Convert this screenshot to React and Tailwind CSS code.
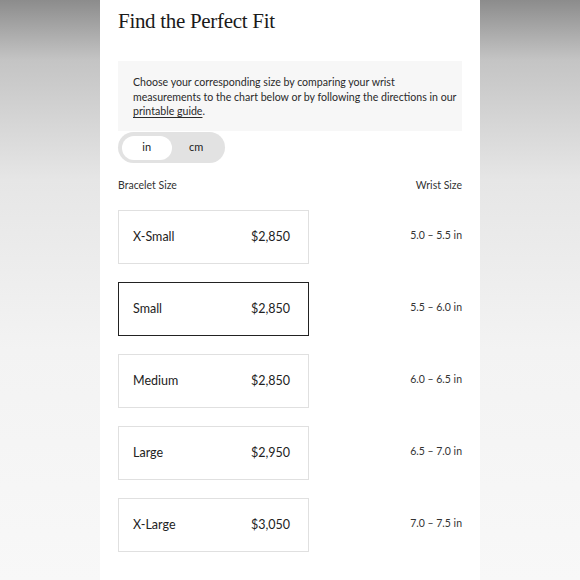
import React, { useState } from 'react'

const sizes = [
  { name: 'X-Small', price: '$2,850', wrist: '5.0 – 5.5 in' },
  { name: 'Small', price: '$2,850', wrist: '5.5 – 6.0 in' },
  { name: 'Medium', price: '$2,850', wrist: '6.0 – 6.5 in' },
  { name: 'Large', price: '$2,950', wrist: '6.5 – 7.0 in' },
  { name: 'X-Large', price: '$3,050', wrist: '7.0 – 7.5 in' },
]

export default function App() {
  const [unit, setUnit] = useState('in')
  const [selected, setSelected] = useState('Small')

  return (
    <div className="flex h-[580px] w-[580px] overflow-hidden bg-[linear-gradient(to_bottom,#8c8c8c_0px,#c4c4c4_60px,#e6e6e6_180px,#f3f3f3_350px,#f8f8f8_580px)] font-['Lato',sans-serif] text-[#222]">
      <div className="w-[100px]" />
      <div className="flex w-[380px] flex-col bg-white px-[18px]">
        {/* Title */}
        <h1 className="mt-[8px] font-['Liberation_Serif',serif] text-[21px] leading-[26px] tracking-[-0.3px] text-[#1a1a1a]">
          Find the Perfect Fit
        </h1>

        {/* Info box */}
        <div className="mt-[27px] h-[70px] whitespace-nowrap bg-[#f7f7f7] pl-[15px] pt-[14px] text-[10.6px] leading-[14.5px] text-[#2a2a2a]">
          <p>Choose your corresponding size by comparing your wrist</p>
          <p>measurements to the chart below or by following the directions in our</p>
          <p>
            <span className="underline decoration-[#2a2a2a] underline-offset-2">printable guide</span>.
          </p>
        </div>

        {/* Unit toggle */}
        <div className="mt-[1px] flex h-[31px] w-[107px] items-center rounded-full bg-[#e2e2e2] p-[4px] text-[11px]">
          {['in', 'cm'].map((u) => (
            <button
              key={u}
              onClick={() => setUnit(u)}
              className={`flex h-[24px] w-[50px] items-center justify-center rounded-full ${
                unit === u ? 'bg-white' : 'bg-transparent'
              }`}
            >
              {u}
            </button>
          ))}
        </div>

        {/* Headers */}
        <div className="mt-[15px] flex justify-between text-[10.5px] leading-[14px] text-[#333]">
          <span>Bracelet Size</span>
          <span>Wrist Size</span>
        </div>

        {/* Rows */}
        <div className="mt-[18px] flex flex-col gap-[18px]">
          {sizes.map((s) => (
            <div key={s.name} className="flex items-center justify-between">
              <button
                onClick={() => setSelected(s.name)}
                className={`flex h-[54px] w-[191px] items-center justify-between px-[14px] text-[12.5px] text-[#222] ${
                  selected === s.name ? 'border border-[#222]' : 'border border-[#e0e0e0]'
                }`}
              >
                <span>{s.name}</span>
                <span className="pr-[4px]">{s.price}</span>
              </button>
              <span className="-mt-[3px] text-[10.5px] text-[#333]">{s.wrist}</span>
            </div>
          ))}
        </div>
      </div>
      <div className="w-[100px]" />
    </div>
  )
}
